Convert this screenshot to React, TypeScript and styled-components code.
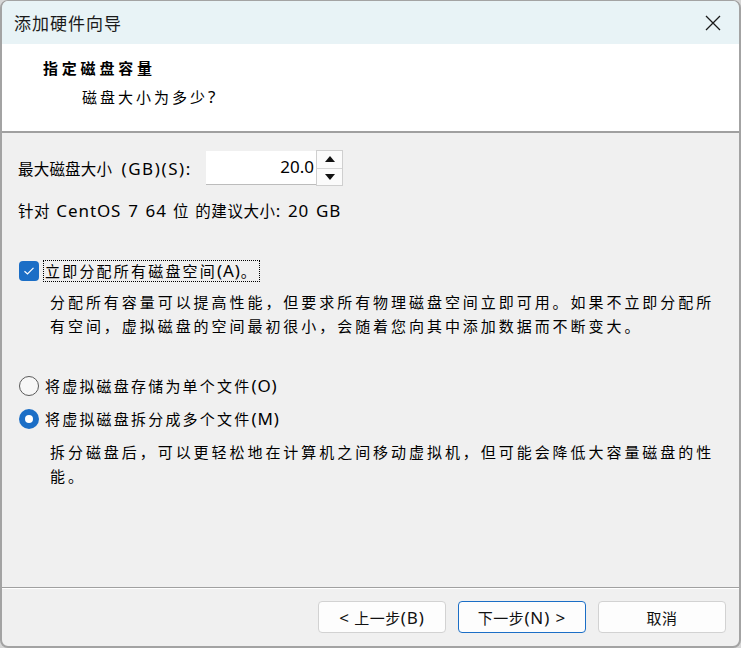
import React from "react";
import styled, { createGlobalStyle } from "styled-components";

const GlobalStyle = createGlobalStyle`
  html, body {
    margin: 0;
    padding: 0;
    background: #d6d6d6;
  }
  body {
    font-family: "Noto Sans", "Noto Sans CJK SC", sans-serif;
    color: #000;
  }
`;

const cjk = `"Noto Sans", "Noto Sans CJK SC", sans-serif`;

const Window = styled.div`
  width: 741px;
  height: 648px;
  box-sizing: border-box;
  display: flex;
  flex-direction: column;
  background: #f0f0f0;
  border: 2px solid #a3a3a3;
  border-top-width: 1px;
  border-radius: 8px;
  overflow: hidden;
`;

const TitleBar = styled.div`
  height: 43px;
  display: flex;
  align-items: center;
  justify-content: space-between;
  padding: 0 14px 0 12px;
  background: #e8f3f6;
`;

const TitleText = styled.span`
  font-family: ${cjk};
  font-size: 17px;
  letter-spacing: 1px;
  color: #1a1a1a;
`;

const CloseButton = styled.div`
  width: 20px;
  height: 20px;
  display: flex;
  align-items: center;
  justify-content: center;
  margin-right: 2px;
`;

const Header = styled.div`
  height: 89px;
  box-sizing: border-box;
  background: #fff;
  border-bottom: 2px solid #a0a0a0;
  padding: 12px 0 0 41px;
`;

const HeaderTitle = styled.div`
  font-family: ${cjk};
  font-size: 15px;
  font-weight: 700;
  letter-spacing: 3.8px;
  line-height: 24px;
`;

const HeaderSub = styled.div`
  font-family: ${cjk};
  font-size: 15px;
  letter-spacing: 3px;
  line-height: 24px;
  margin-top: 5px;
  padding-left: 39px;
`;

/* Latin runs inside CJK text are set a bit larger and wider */
const Latin = styled.span`
  font-size: 17px;
  letter-spacing: 0.9px;
`;

const Body = styled.div`
  flex: 1;
  padding: 18px 0 0 16px;
`;

const SizeRow = styled.div`
  display: flex;
  align-items: center;
  height: 34px;
`;

const SizeLabel = styled.span`
  font-family: ${cjk};
  font-size: 15.5px;
  letter-spacing: 0.2px;
  word-spacing: 5px;
  width: 188px;

  ${Latin} {
    letter-spacing: 1.6px;
  }
`;

const SpinBox = styled.div`
  display: flex;
  height: 34px;
`;

const SpinInput = styled.div`
  width: 110px;
  box-sizing: border-box;
  background: #fff;
  border-bottom: 1px solid #bcbcbc;
  font-size: 17px;
  text-align: right;
  padding: 4px 2px 0 0;
`;

const SpinButtons = styled.div`
  display: flex;
  flex-direction: column;
  width: 27px;
  box-sizing: border-box;
  border: 1px solid #cfcfcf;
  margin-top: -1px;
  height: 36px;
`;

const SpinButton = styled.div<{ $down?: boolean }>`
  flex: 1;
  display: flex;
  align-items: center;
  justify-content: center;
  background: #fbfbfb;
  border-top: ${(p) => (p.$down ? "1px solid #d6d6d6" : "none")};
`;

const Arrow = styled.span<{ $down?: boolean }>`
  width: 0;
  height: 0;
  border-left: 5px solid transparent;
  border-right: 5px solid transparent;
  ${(p) =>
    p.$down ? "border-top: 6px solid #111;" : "border-bottom: 6px solid #111;"}
`;

const Hint = styled.div`
  font-family: ${cjk};
  font-size: 15.5px;
  line-height: 20px;
  margin-top: 16px;
  letter-spacing: 0.6px;
  word-spacing: 1.5px;
`;

const OptionRow = styled.div<{ $gap: number }>`
  display: flex;
  align-items: center;
  height: 24px;
  margin-top: ${(p) => p.$gap}px;
`;

const CheckBox = styled.div`
  width: 20px;
  height: 20px;
  border-radius: 4px;
  background: #1b6ec6;
  display: flex;
  align-items: center;
  justify-content: center;
  margin-right: 4px;
  margin-left: 1px;
`;

const Radio = styled.div<{ $checked?: boolean }>`
  width: 20px;
  height: 20px;
  box-sizing: border-box;
  border-radius: 50%;
  margin-right: 4px;
  margin-left: 1px;
  display: flex;
  align-items: center;
  justify-content: center;
  background: ${(p) => (p.$checked ? "#1b6ec6" : "#f7f7f7")};
  border: ${(p) => (p.$checked ? "none" : "1px solid #5a5a5a")};
`;

const RadioDot = styled.span`
  width: 8px;
  height: 8px;
  border-radius: 50%;
  background: #fff;
`;

const OptionLabel = styled.span<{ $focused?: boolean }>`
  font-family: ${cjk};
  font-size: 15px;
  letter-spacing: 2.2px;
  line-height: 20px;
  padding: 0 1px;
  border: 1px dotted ${(p) => (p.$focused ? "#000" : "transparent")};
`;

const Description = styled.p<{ $gap: number }>`
  margin: ${(p) => p.$gap}px 0 0 32px;
  width: 680px;
  font-family: ${cjk};
  font-size: 15px;
  letter-spacing: 2.95px;
  line-height: 24px;
`;

const Footer = styled.div`
  height: 59px;
  box-sizing: border-box;
  border-top: 1px solid #a0a0a0;
  box-shadow: inset 0 1px 0 #fff;
  display: flex;
  justify-content: flex-end;
  gap: 12px;
  padding: 13px 13px 0 0;
`;

const Button = styled.div<{ $primary?: boolean }>`
  width: 128px;
  height: 32px;
  box-sizing: border-box;
  border-radius: 4px;
  background: #fdfdfd;
  border: 1px solid ${(p) => (p.$primary ? "#1b6ec6" : "#d2d2d2")};
  display: flex;
  align-items: center;
  justify-content: center;
  font-family: ${cjk};
  font-size: 15px;
  letter-spacing: 0.5px;
  color: #111;
`;

const App: React.FC = () => {
  return (
    <>
      <GlobalStyle />
      <Window>
        <TitleBar>
          <TitleText>添加硬件向导</TitleText>
          <CloseButton>
            <svg width="16" height="16" viewBox="0 0 16 16">
              <path d="M1 1L15 15M15 1L1 15" stroke="#1a1a1a" strokeWidth="1.3" />
            </svg>
          </CloseButton>
        </TitleBar>
        <Header>
          <HeaderTitle>指定磁盘容量</HeaderTitle>
          <HeaderSub>
            磁盘大小为多少<Latin>?</Latin>
          </HeaderSub>
        </Header>
        <Body>
          <SizeRow>
            <SizeLabel>
              最大磁盘大小 <Latin>(GB)(S):</Latin>
            </SizeLabel>
            <SpinBox>
              <SpinInput>20.0</SpinInput>
              <SpinButtons>
                <SpinButton>
                  <Arrow />
                </SpinButton>
                <SpinButton $down>
                  <Arrow $down />
                </SpinButton>
              </SpinButtons>
            </SpinBox>
          </SizeRow>
          <Hint>
            针对 <Latin>CentOS 7 64</Latin> 位 的建议大小<Latin>: 20 GB</Latin>
          </Hint>
          <OptionRow $gap={38}>
            <CheckBox>
              <svg width="12" height="10" viewBox="0 0 12 10">
                <path d="M1.5 5.2L4.5 8L10.5 1.8" fill="none" stroke="#fff" strokeWidth="1.2" />
              </svg>
            </CheckBox>
            <OptionLabel $focused>
              立即分配所有磁盘空间<Latin>(A)</Latin>。
            </OptionLabel>
          </OptionRow>
          <Description $gap={7}>
            分配所有容量可以提高性能，但要求所有物理磁盘空间立即可用。如果不立即分配所有空间，虚拟磁盘的空间最初很小，会随着您向其中添加数据而不断变大。
          </Description>
          <OptionRow $gap={36}>
            <Radio />
            <OptionLabel>
              将虚拟磁盘存储为单个文件<Latin>(O)</Latin>
            </OptionLabel>
          </OptionRow>
          <OptionRow $gap={9}>
            <Radio $checked>
              <RadioDot />
            </Radio>
            <OptionLabel>
              将虚拟磁盘拆分成多个文件<Latin>(M)</Latin>
            </OptionLabel>
          </OptionRow>
          <Description $gap={9}>
            拆分磁盘后，可以更轻松地在计算机之间移动虚拟机，但可能会降低大容量磁盘的性能。
          </Description>
        </Body>
        <Footer>
          <Button>
            <Latin>&lt;</Latin>&nbsp;上一步<Latin>(B)</Latin>
          </Button>
          <Button $primary>
            下一步<Latin>(N) &gt;</Latin>
          </Button>
          <Button>取消</Button>
        </Footer>
      </Window>
    </>
  );
};

export default App;
